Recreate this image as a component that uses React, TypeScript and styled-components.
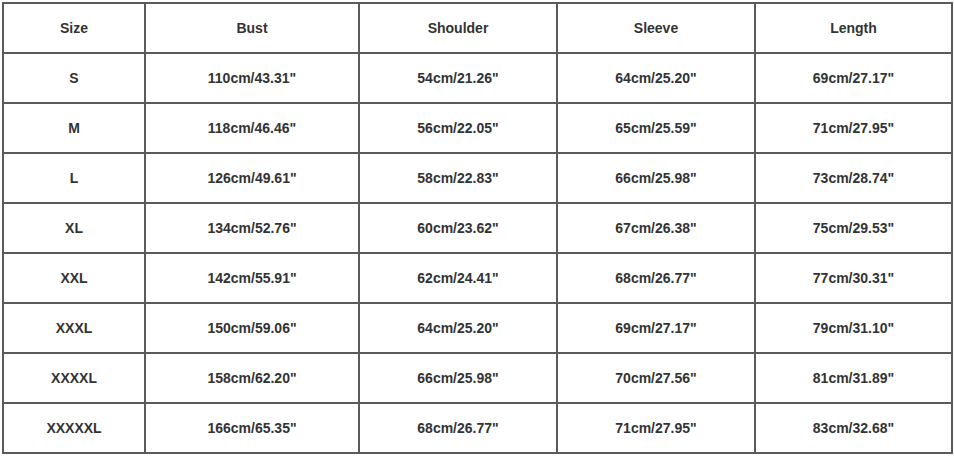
import React from 'react';
import styled, { createGlobalStyle } from 'styled-components';

const GlobalStyle = createGlobalStyle`
  html, body {
    margin: 0;
    padding: 0;
    background: #ffffff;
  }
`;

const Page = styled.div`
  padding: 2px 0 0 2px;
  width: 954px;
  height: 456px;
  box-sizing: border-box;
  background: #ffffff;
`;

const Table = styled.table`
  border-collapse: collapse;
  table-layout: fixed;
  width: 951px;
  font-family: 'Liberation Sans', Arial, sans-serif;
  font-size: 14px;
  font-weight: 700;
  color: #333333;
`;

const Cell = styled.td<{ $width?: number }>`
  border: 2px solid #5a5a5a;
  height: 48px;
  padding: 0;
  text-align: center;
  vertical-align: middle;
  ${(p) => (p.$width ? `width: ${p.$width}px;` : '')}
`;

const HeadCell = styled(Cell).attrs({ as: 'th' })`
  font-weight: 700;
`;

const columns = [
  { label: 'Size', width: 140 },
  { label: 'Bust', width: 212 },
  { label: 'Shoulder', width: 196 },
  { label: 'Sleeve', width: 196 },
  { label: 'Length', width: 195 },
];

const rows: string[][] = [
  ['S', '110cm/43.31"', '54cm/21.26"', '64cm/25.20"', '69cm/27.17"'],
  ['M', '118cm/46.46"', '56cm/22.05"', '65cm/25.59"', '71cm/27.95"'],
  ['L', '126cm/49.61"', '58cm/22.83"', '66cm/25.98"', '73cm/28.74"'],
  ['XL', '134cm/52.76"', '60cm/23.62"', '67cm/26.38"', '75cm/29.53"'],
  ['XXL', '142cm/55.91"', '62cm/24.41"', '68cm/26.77"', '77cm/30.31"'],
  ['XXXL', '150cm/59.06"', '64cm/25.20"', '69cm/27.17"', '79cm/31.10"'],
  ['XXXXL', '158cm/62.20"', '66cm/25.98"', '70cm/27.56"', '81cm/31.89"'],
  ['XXXXXL', '166cm/65.35"', '68cm/26.77"', '71cm/27.95"', '83cm/32.68"'],
];

export default function App() {
  return (
    <>
      <GlobalStyle />
      <Page>
        <Table>
          <thead>
            <tr>
              {columns.map((c) => (
                <HeadCell key={c.label} $width={c.width}>
                  {c.label}
                </HeadCell>
              ))}
            </tr>
          </thead>
          <tbody>
            {rows.map((r) => (
              <tr key={r[0]}>
                {r.map((v, i) => (
                  <Cell key={i}>{v}</Cell>
                ))}
              </tr>
            ))}
          </tbody>
        </Table>
      </Page>
    </>
  );
}
